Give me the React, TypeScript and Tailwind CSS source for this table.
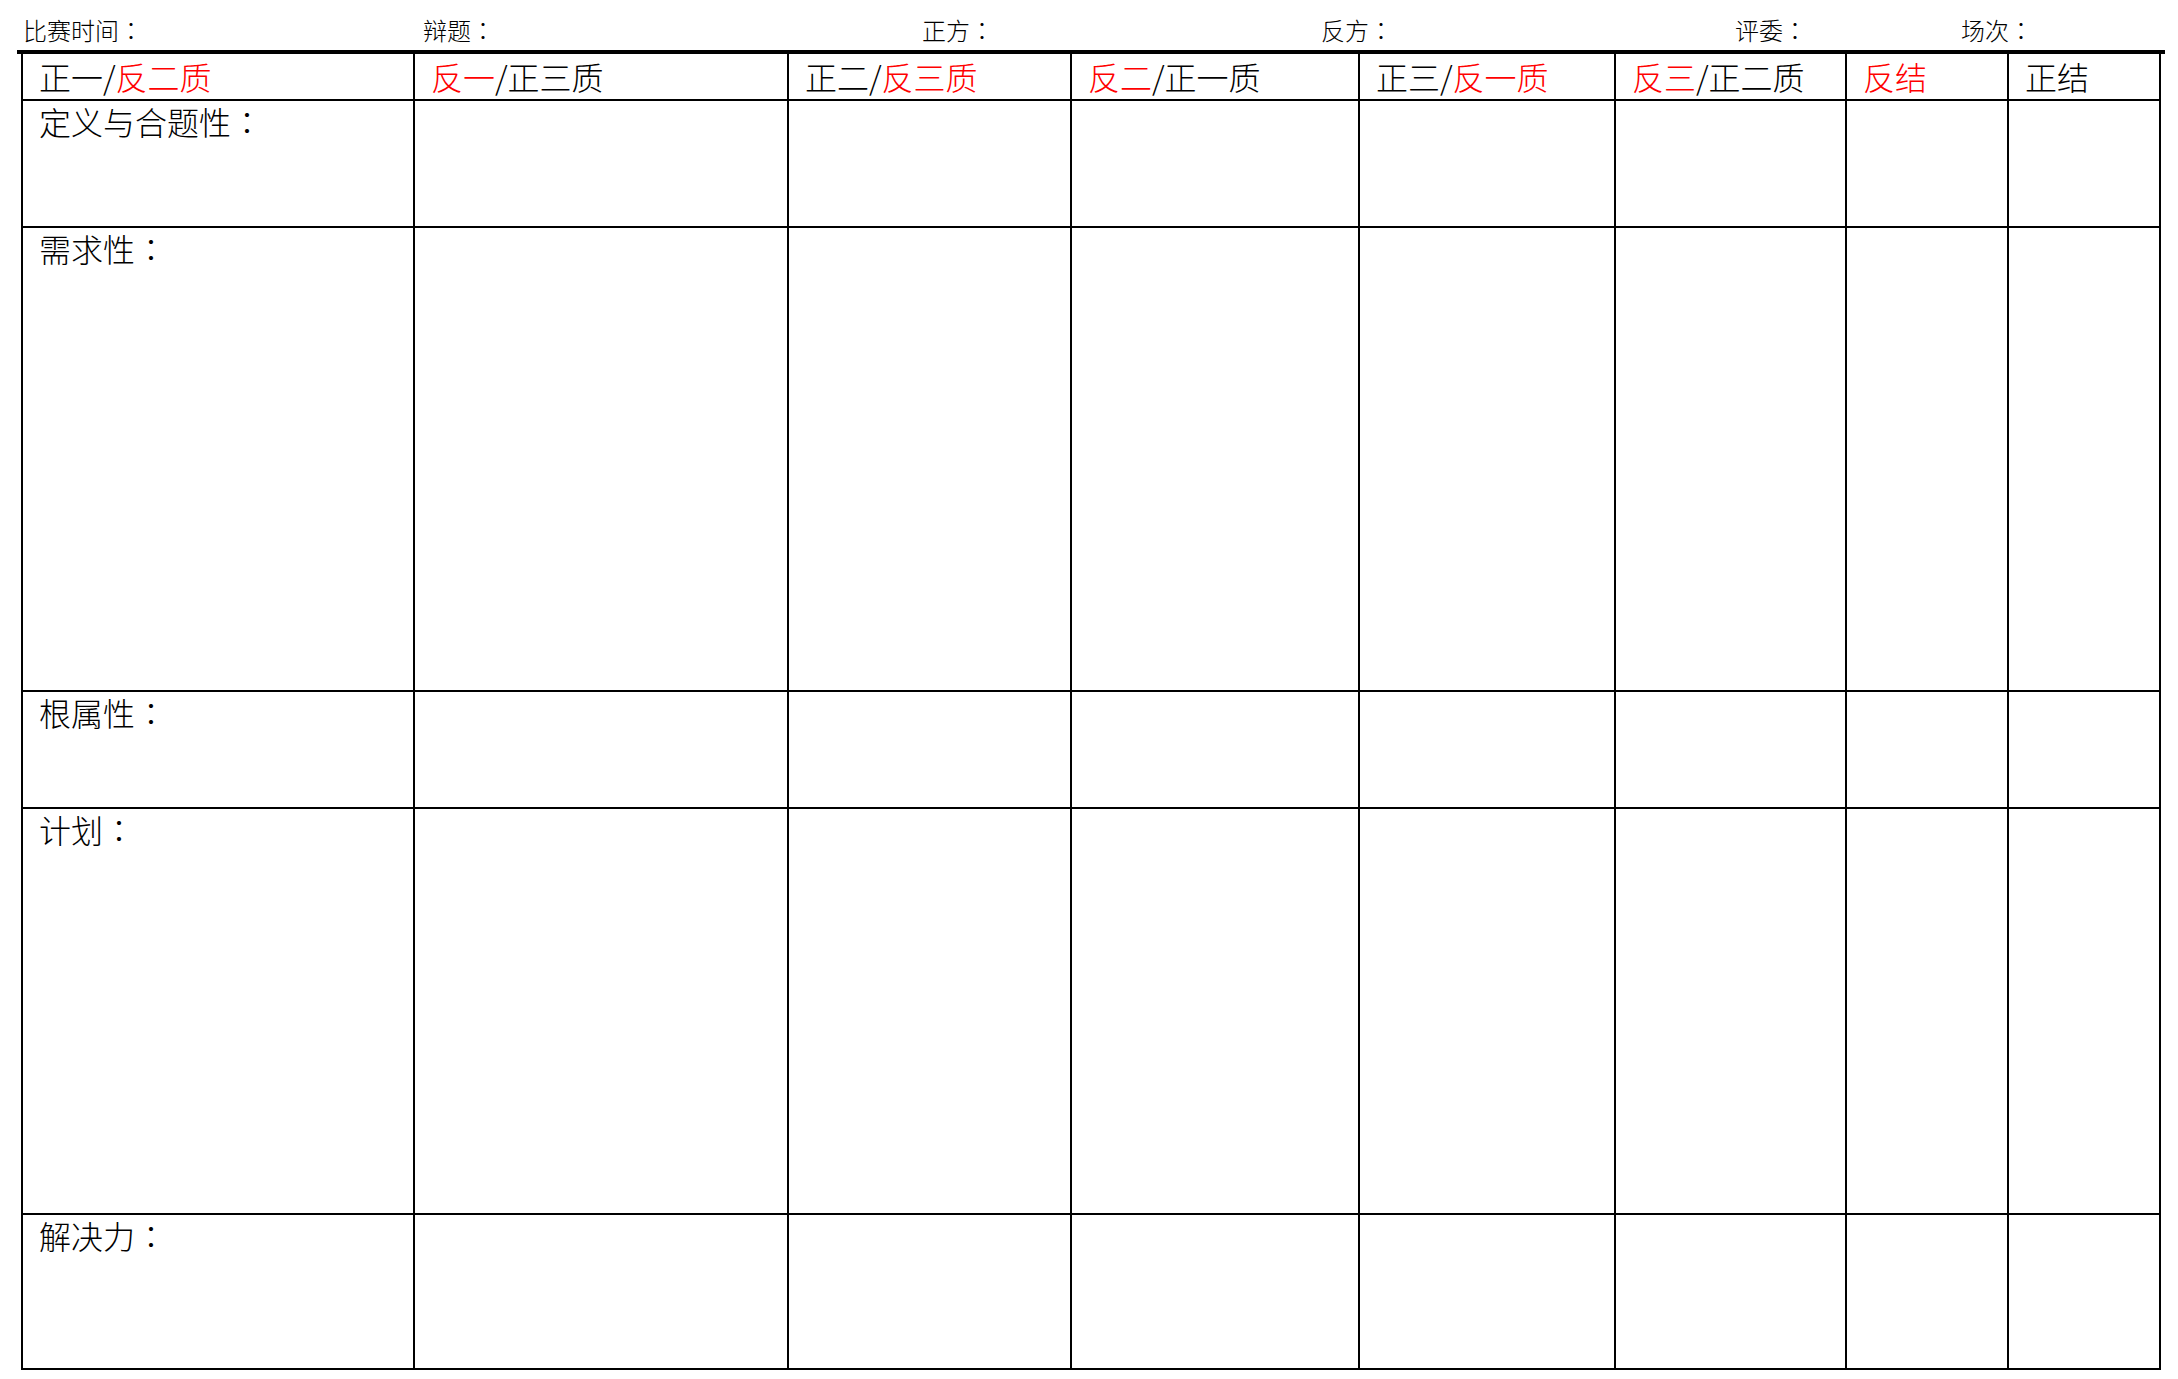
import React from "react";

const FONT = { fontFamily: '"Noto Sans CJK SC", "Noto Sans", sans-serif' };

const R = ({ children }: { children: React.ReactNode }) => (
  <span className="text-[#ff0000]">{children}</span>
);

const C = () => (
  <span style={{ fontFamily: '"Noto Sans CJK TC", "Noto Sans CJK SC", sans-serif' }}>：</span>
);

const headers: React.ReactNode[] = [
  <>正一/<R>反二质</R></>,
  <><R>反一</R>/正三质</>,
  <>正二/<R>反三质</R></>,
  <><R>反二</R>/正一质</>,
  <>正三/<R>反一质</R></>,
  <><R>反三</R>/正二质</>,
  <><R>反结</R></>,
  <>正结</>,
];

const rows: { label: string; h: string }[] = [
  { label: "定义与合题性", h: "h-[125px]" },
  { label: "需求性", h: "h-[462px]" },
  { label: "根属性", h: "h-[115px]" },
  { label: "计划", h: "h-[404px]" },
  { label: "解决力", h: "h-[153px]" },
];

export default function App() {
  return (
    <div className="w-[2178px] h-[1379px] bg-white text-black overflow-hidden font-light" style={FONT}>
      <div className="flex h-[50px] pt-[16px] text-[24px] leading-[28px]">
        <div className="w-[423px] pl-[23px]">比赛时间<C /></div>
        <div className="w-[499px]">辩题<C /></div>
        <div className="w-[399px]">正方<C /></div>
        <div className="w-[414px]">反方<C /></div>
        <div className="w-[226px]">评委<C /></div>
        <div>场次<C /></div>
      </div>
      <div className="ml-[17px] w-[2148px] h-[4px] bg-black" />
      <div className="ml-[21px] w-[2140px] bg-black px-[2px] pb-[2px] grid grid-cols-[390px_372px_281px_286px_254px_229px_160px_150px] gap-[2px]">
        {headers.map((h, i) => (
          <div key={i} className="bg-white h-[45px] pl-[16px] pt-[4px] text-[32px] leading-[36px] whitespace-nowrap">
            {h}
          </div>
        ))}
        {rows.map((r) => (
          <React.Fragment key={r.label}>
            <div className={`bg-white ${r.h} pl-[16px] pt-[2px] text-[32px] leading-[36px] whitespace-nowrap`}>
              {r.label}<C />
            </div>
            {Array.from({ length: 7 }).map((_, j) => (
              <div key={j} className={`bg-white ${r.h}`} />
            ))}
          </React.Fragment>
        ))}
      </div>
    </div>
  );
}
